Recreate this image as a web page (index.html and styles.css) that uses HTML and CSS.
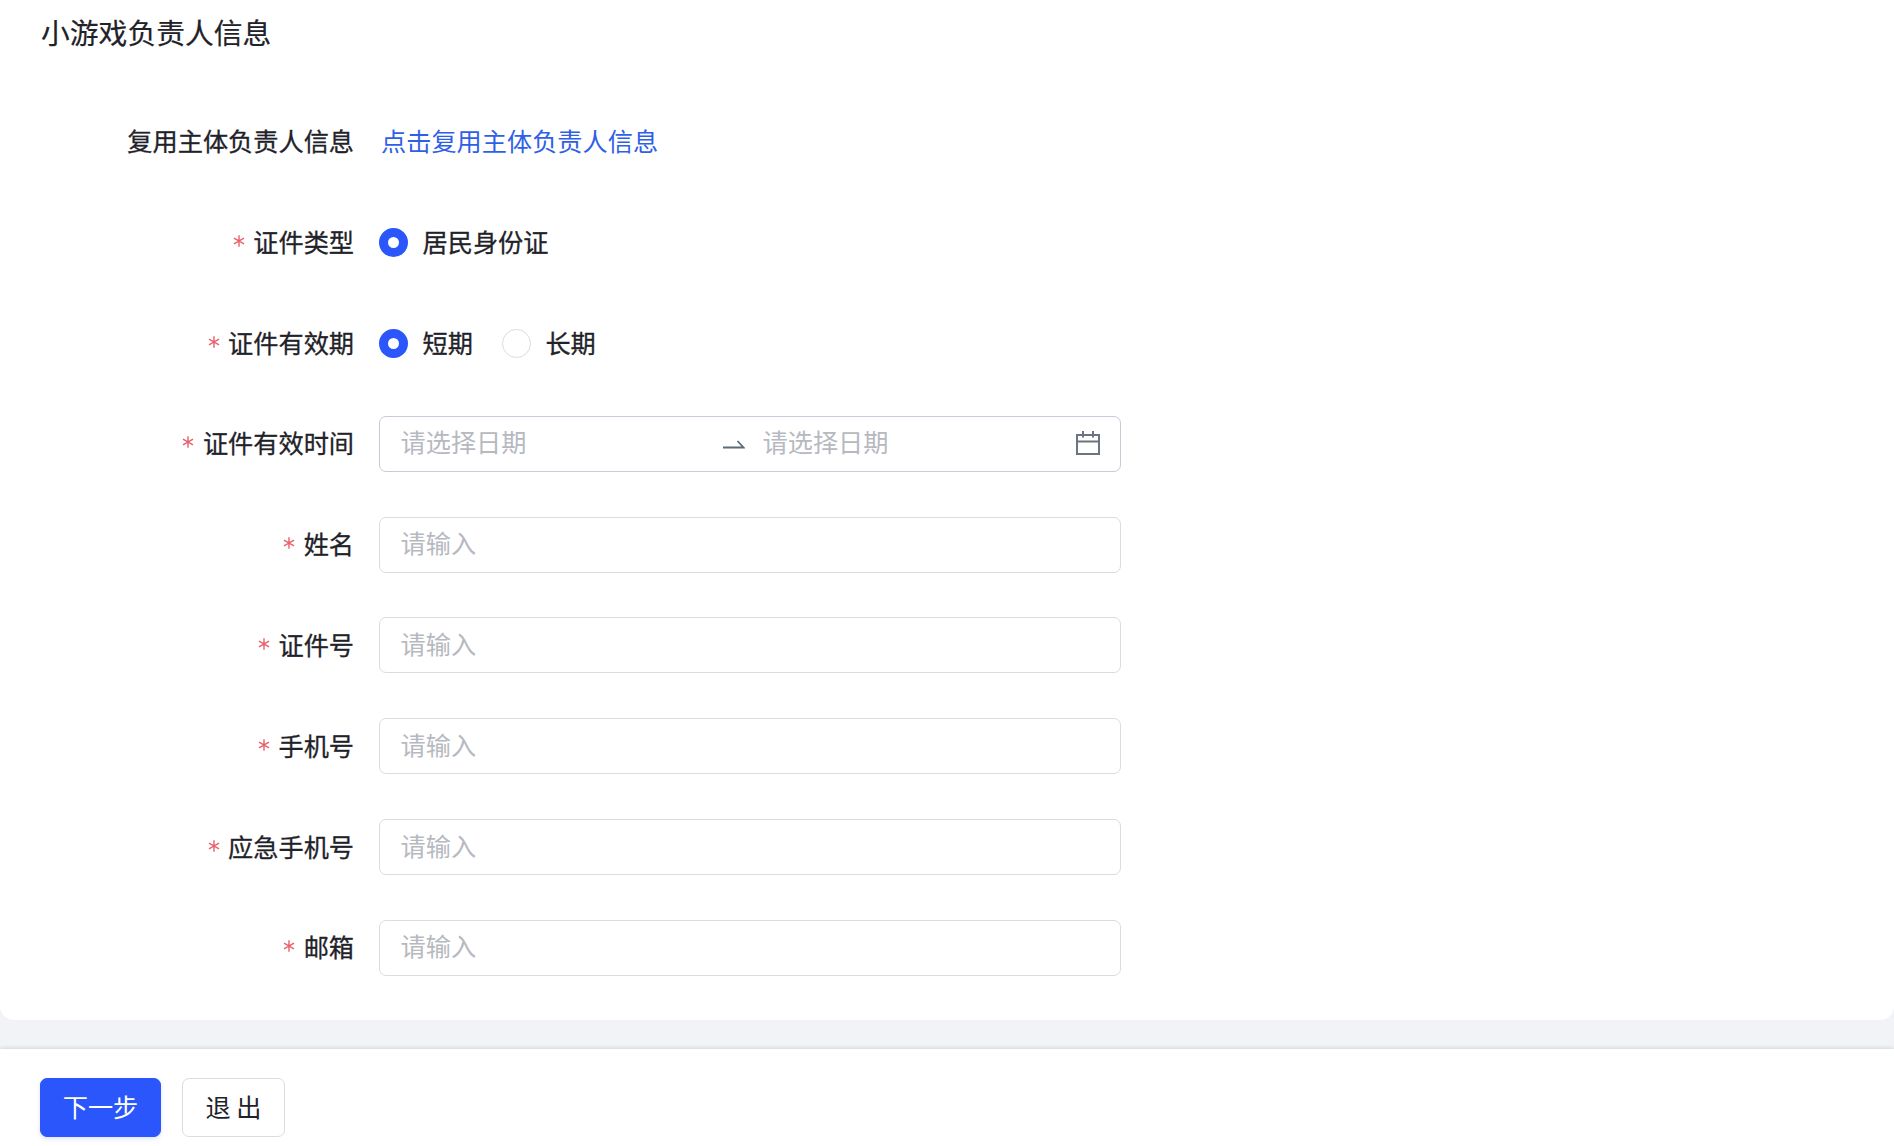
FILE: index.html
```html
<!DOCTYPE html>
<html lang="zh-CN">
<head>
<meta charset="utf-8">
<title>小游戏负责人信息</title>
<link rel="stylesheet" href="styles.css">
</head>
<body>
<svg class="defs" width="0" height="0"><symbol id="star" viewBox="0 0 12 12"><path d="M6 0.3V11.7M1 3.1L11 8.9M11 3.1L1 8.9" fill="none" stroke="currentColor" stroke-width="1.4"/></symbol></svg>
<div class="page">
  <main class="card">
    <h2 class="title">小游戏负责人信息</h2>
    <form class="form">
      <div class="row row-first">
        <label class="label">复用主体负责人信息</label>
        <a class="link" href="#">点击复用主体负责人信息</a>
      </div>
      <div class="row">
        <label class="label"><svg class="star"><use href="#star"/></svg>证件类型</label>
        <div class="radios">
          <span class="radio on"></span><span class="radio-text">居民身份证</span>
        </div>
      </div>
      <div class="row">
        <label class="label"><svg class="star"><use href="#star"/></svg>证件有效期</label>
        <div class="radios">
          <span class="radio on"></span><span class="radio-text">短期</span>
          <span class="radio"></span><span class="radio-text">长期</span>
        </div>
      </div>
      <div class="row">
        <label class="label"><svg class="star"><use href="#star"/></svg>证件有效时间</label>
        <div class="range">
          <input class="range-input" placeholder="请选择日期">
          <svg class="arrow" width="22" height="9" viewBox="0 0 22 9"><path d="M0 7.5H20.5L14.5 1" fill="none" stroke="#5e6a7a" stroke-width="1.8"/></svg>
          <input class="range-input" placeholder="请选择日期">
          <svg class="cal" width="24" height="24" viewBox="0 0 24 24" fill="none" stroke="#6b7480" stroke-width="2"><rect x="1" y="4" width="22" height="19"/><path d="M1 10.5H23M7 0V6.5M17 0V6.5"/></svg>
        </div>
      </div>
      <div class="row"><label class="label"><svg class="star"><use href="#star"/></svg>姓名</label><input class="input" placeholder="请输入"></div>
      <div class="row"><label class="label"><svg class="star"><use href="#star"/></svg>证件号</label><input class="input" placeholder="请输入"></div>
      <div class="row"><label class="label"><svg class="star"><use href="#star"/></svg>手机号</label><input class="input" placeholder="请输入"></div>
      <div class="row"><label class="label"><svg class="star"><use href="#star"/></svg>应急手机号</label><input class="input" placeholder="请输入"></div>
      <div class="row"><label class="label"><svg class="star"><use href="#star"/></svg>邮箱</label><input class="input" placeholder="请输入"></div>
    </form>
  </main>
  <footer class="footer">
    <button class="btn primary" type="button">下一步</button>
    <button class="btn" type="button">退 出</button>
  </footer>
</div>
</body>
</html>
```
FILE: styles.css
```css
* { box-sizing: border-box; }
html, body { margin: 0; padding: 0; }
body {
  width: 1894px;
  height: 1146px;
  overflow: hidden;
  background: #f2f3f7;
  color: #1f2329;
  font-family: "Noto Sans CJK SC", "Noto Sans", sans-serif;
  font-size: 25.2px;
}
.defs { display: block; height: 0; }
.page { display: flex; flex-direction: column; height: 1146px; }
.card {
  height: 1020px;
  background: #fff;
  border-radius: 0 0 14px 14px;
  padding-left: 41px;
  flex: none;
}
.title {
  margin: 0;
  padding-top: 12px;
  height: 91px;
  font-size: 28.8px;
  font-weight: 400;
  line-height: 40px;
  -webkit-text-stroke: 0.2px #1f2329;
}
.form { display: flex; flex-direction: column; padding-top: 22.5px; }
.row {
  display: flex;
  align-items: center;
  gap: 25px;
  height: 56px;
  margin-bottom: 44.8px;
}
.row-first { height: 52px; margin-bottom: 48.8px; }
.row-first .label { padding-bottom: 0; }
.label {
  width: 313px;
  flex: none;
  display: flex;
  justify-content: flex-end;
  align-items: center;
  line-height: 36px;
  padding-bottom: 3px;
  -webkit-text-stroke: 0.3px #1f2329;
}
.star {
  width: 12px;
  height: 12px;
  margin-right: 8.5px;
  color: #e8606b;
  flex: none;
}
.link { color: #2f5fe8; text-decoration: none; margin-left: 2px; }
.radios { display: flex; align-items: center; }
.radio {
  width: 29px;
  height: 29px;
  border-radius: 50%;
  border: 1.5px solid #dcdcdc;
  background: #fff;
  flex: none;
}
.radio.on { border: 9px solid #2a56fb; }
.radio-text {
  margin: 0 29px 0 14.5px;
  padding-bottom: 2px;
  color: #1f2329;
  -webkit-text-stroke: 0.3px #1f2329;
}
.input, .range {
  width: 742px;
  height: 56px;
  border: 1.5px solid #dcdcdc;
  border-radius: 7px;
  background: #fff;
  flex: none;
}
.input {
  padding: 0 20.5px 5px;
  font: inherit;
  color: #1f2329;
  outline: none;
}
.input::placeholder, .range-input::placeholder { color: #b6b9c0; opacity: 1; }
.range {
  display: flex;
  align-items: center;
  padding: 0 20px 0 20.5px;
  border-color: #c6cbd8;
}
.range-input {
  border: 0;
  padding: 0 0 5px;
  outline: none;
  font: inherit;
  background: transparent;
  min-width: 0;
  width: 300px;
}
.range-input:first-child { width: 322px; }
.range-input:nth-of-type(2) { margin-left: 18px; width: 312px; }
.arrow { flex: none; position: relative; top: 1px; }
.cal { flex: none; margin-left: auto; position: relative; top: -1px; }
.footer {
  margin-top: 29px;
  flex: 1;
  background: #fff;
  box-shadow: 0 -1px 4px rgba(0, 0, 0, 0.12);
  padding: 29px 0 0 40px;
  display: flex;
  align-items: flex-start;
  gap: 21px;
}
.btn {
  height: 59px;
  width: 103px;
  border: 1.5px solid #dcdcdc;
  border-radius: 7px;
  background: #fff;
  color: #1f2329;
  font: inherit;
  padding: 0 0 3px;
}
.btn.primary {
  width: 121px;
  background: #2a56fb;
  border-color: #2a56fb;
  color: #fff;
  box-shadow: 0 2px 4px rgba(42, 86, 251, 0.15);
}
```
